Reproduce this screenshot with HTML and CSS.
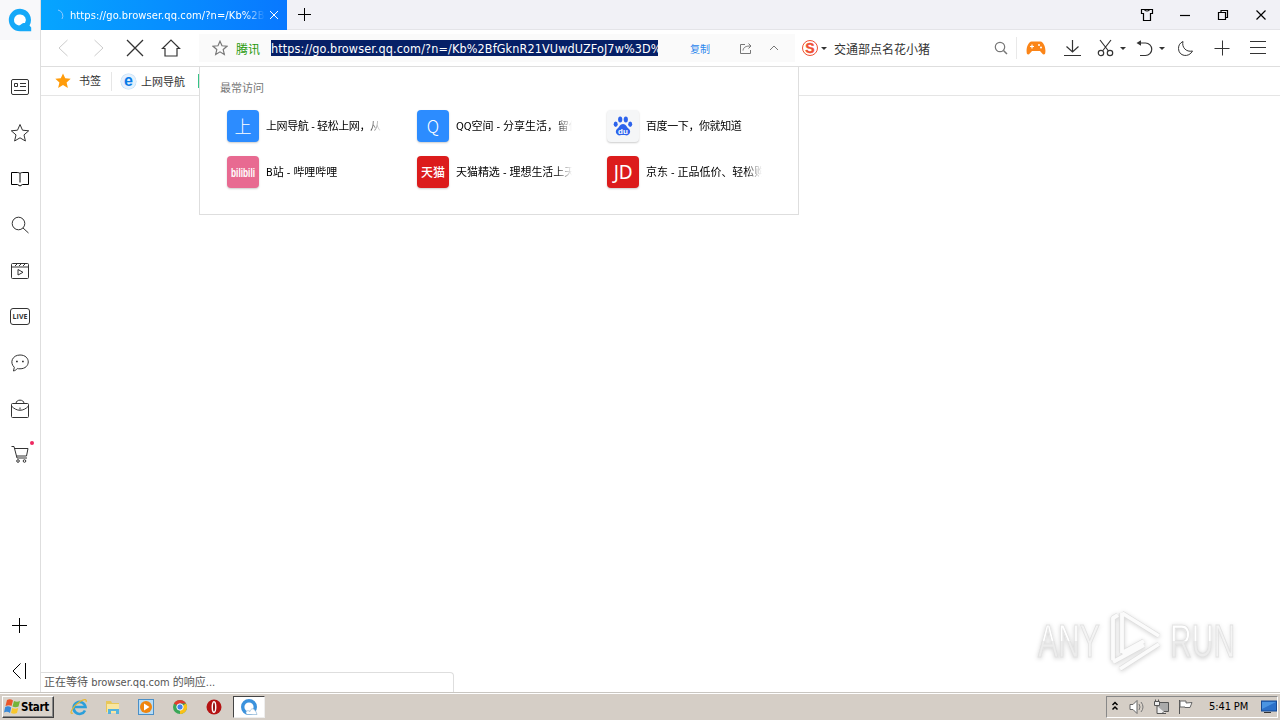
FILE: index.html
```html
<!DOCTYPE html>
<html lang="zh-CN">
<head>
<meta charset="utf-8">
<title>QQ Browser</title>
<link rel="stylesheet" href="styles.css">
</head>
<body>
<div class="window">
  <aside class="sidebar">
    <div class="logo"><svg width="24" height="24" viewBox="0 0 24 24"><path d="M12 .8a11.200 11.200 0 1 0 0 22.400h11.200v-3.600l-1.700-2A11.200 11.200 0 0 0 12 .8z" fill="#15a9f8"/><path d="M12 6.500a5.500 5.500 0 0 0-1 11c2 0 2.500-2.500 4.500-2.500h1.500A5.500 5.500 0 0 0 12 6.500z" fill="#fff"/></svg></div>
    <div class="side-item"><svg width="20" height="18" viewBox="0 0 20 18"><rect x="1.500" y="1.500" width="17" height="15" rx="1.500"/><path d="M4.500 5.500h3v3h-3zM10 5.500h6M10 8.500h6M4 12.500h12"/></svg></div>
    <div class="side-item"><svg width="20" height="20" viewBox="0 0 20 20"><path d="M10 1.500l2.500 5.700 6.200.6-4.700 4.100 1.400 6.100-5.400-3.200L4.600 18 6 11.900 1.300 7.800l6.200-.6z"/></svg></div>
    <div class="side-item dark"><svg width="20" height="16" viewBox="0 0 20 16"><path d="M10 2.500C9 1.500 8 1.500 7 1.500H1.500v12h6L10 15l2.500-1.500h6v-12H13c-1 0-2 0-3 1zv9"/></svg></div>
    <div class="side-item"><svg width="20" height="20" viewBox="0 0 20 20"><circle cx="8.500" cy="8.500" r="6.300"/><path d="M13 13l5.500 5"/></svg></div>
    <div class="side-item"><svg width="20" height="18" viewBox="0 0 20 18"><rect x="1.500" y="1.500" width="17" height="15" rx="1"/><path d="M1.500 5h17M5 4l2-2M9 4l2-2M13 4l2-2M8 7.500v5.500l5-2.700z"/></svg></div>
    <div class="side-item"><span class="live">LIVE</span></div>
    <div class="side-item"><svg width="20" height="20" viewBox="0 0 20 20"><path d="M3.500 18l.8-3.700C-.8 9.500 2.500 2 10 2c11 0 11 13.800 0 13.800-1.200 0-1.800-.1-2.700-.2C6 17 5 17.600 3.500 18z"/><path d="M6 8.500h1.800M12 8.500h1.800" stroke-width="1.600"/></svg></div>
    <div class="side-item"><svg width="20" height="20" viewBox="0 0 20 20"><rect x="1.500" y="4.500" width="17" height="14" rx="1"/><path d="M6 4.500C6 0 14 0 14 4.500M1.500 7c5 5.700 12 5.700 17 0M10 8.500v2"/></svg></div>
    <div class="side-item cart"><svg width="20" height="20" viewBox="0 0 20 20"><path d="M1.500 2.500H4l3 11.500h10M4.500 4.500h13.500l-1.500 7.500H6.500"/><circle cx="8" cy="17" r="1.300"/><circle cx="14.500" cy="17" r="1.300"/></svg><i class="dot"></i></div>
    <div class="side-space"></div>
    <div class="side-item dark add"><svg width="17" height="17" viewBox="0 0 17 17"><path d="M1 8.500h15M8.500 1v15"/></svg></div>
    <div class="side-item dark fold"><svg width="18" height="18" viewBox="0 0 18 18"><path d="M9.500 1.500L2 9l7.500 7.500M14.500 1v16"/></svg></div>
  </aside>
  <main class="browser">
    <header class="tabbar">
      <div class="tab">
        <svg width="8" height="12" viewBox="0 0 8 12"><path d="M1 1a6 6 0 0 1 4 9" stroke="#8dcaff"/></svg>
        <span class="tab-title">https://go.browser.qq.com/?n=/Kb%2B</span>
        <svg class="white" width="10" height="10" viewBox="0 0 10 10"><path d="M1 1l8 8M9 1L1 9"/></svg>
      </div>
      <svg class="newtab" width="15" height="15" viewBox="0 0 15 15"><path d="M7.500 1v13M1 7.500h13"/></svg>
      <div class="controls">
        <svg width="14" height="14" viewBox="0 0 14 14"><path d="M1.500 1.500h3c.3 2 4.700 2 5 0h3v4h-2v7h-7v-7h-2zM4.500 1.500h5"/></svg>
        <svg width="14" height="14" viewBox="0 0 14 14"><path d="M2 7.500h10"/></svg>
        <svg width="14" height="14" viewBox="0 0 14 14"><path d="M2.500 4.500h7v7h-7zM5 4.500v-2h6.500v7h-2"/></svg>
        <svg width="14" height="14" viewBox="0 0 14 14"><path d="M2.500 2.500l9 9M11.500 2.500l-9 9"/></svg>
      </div>
    </header>
    <nav class="toolbar">
      <span class="cell faint"><svg width="12" height="18" viewBox="0 0 12 18"><path d="M10.500 1L2 9l8.500 8"/></svg></span>
      <span class="cell faint"><svg width="12" height="18" viewBox="0 0 12 18"><path d="M1.500 1L10 9l-8.500 8"/></svg></span>
      <span class="cell"><svg width="18" height="18" viewBox="0 0 18 18"><path d="M1 1l16 16M17 1L1 17" stroke-width="1.300"/></svg></span>
      <span class="cell"><svg width="20" height="20" viewBox="0 0 20 20"><path d="M1.500 10.500L10 2l8.500 8.500H16v7.500H4v-7.500z" stroke-width="1.200"/></svg></span>
      <div class="address">
        <svg class="gray" width="16" height="16" viewBox="0 0 20 20"><path d="M10 1.500l2.500 5.700 6.200.6-4.700 4.100 1.400 6.100-5.400-3.200L4.600 18 6 11.900 1.300 7.800l6.200-.6z" stroke-width="1.500"/></svg>
        <span class="owner">腾讯</span>
        <span class="url">https://go.browser.qq.com/?n=/Kb%2BfGknR21VUwdUZFoJ7w%3D%</span>
        <span class="copy">复制</span>
        <svg class="share gray" width="13" height="13" viewBox="0 0 13 13"><path d="M6 2.500H1.500v9h10V8M4 8.500C4.500 5 7 4 11.500 4M9.500 1.500L12 4 9.500 6.500"/></svg>
        <svg class="up gray" width="10" height="6" viewBox="0 0 10 6"><path d="M1 5l4-4 4 4"/></svg>
      </div>
      <div class="search">
        <span class="sogou">S</span><i class="tri"></i>
        <span class="query">交通部点名花小猪</span>
        <svg class="gray" width="14" height="14" viewBox="0 0 14 14"><circle cx="6" cy="6" r="4.700" stroke-width="1.200"/><path d="M9.500 9.500l3.500 3.500" stroke-width="1.500"/></svg>
      </div>
      <span class="cell game"><svg width="20" height="14" viewBox="0 0 20 14"><path d="M1 13C-.5 8 2 1 5.500.5h9C18 1 20.500 8 19 13c-2 1.500-3-1-5-3H6c-2 2-3 4.500-5 3z" fill="#fb8518"/><path d="M6 3.500v4M4 5.500h4" stroke="#fff" stroke-width="1.200"/><circle cx="13" cy="4" r="1" fill="#fff"/><circle cx="15" cy="6.500" r="1" fill="#fff"/></svg></span>
      <span class="cell"><svg width="18" height="18" viewBox="0 0 18 18"><path d="M9.500 1v12M3.500 7.500l6 5.500 6-5.500M1 16.500h17" stroke-width="1.200"/></svg></span>
      <span class="cell combo"><svg width="17" height="18" viewBox="0 0 17 18"><path d="M3 1l8.500 11M14 1L5.500 12" stroke-width="1.200"/><circle cx="4" cy="14" r="2.700" stroke-width="1.200"/><circle cx="13" cy="14" r="2.700" stroke-width="1.200"/></svg><i class="tri"></i></span>
      <span class="cell combo"><svg width="17" height="18" viewBox="0 0 17 18"><path d="M2 4h7.500a6 6 0 0 1 0 12.500H4" stroke-width="1.200"/><path d="M.5 4L5 1.200v5.600z" fill="#333" stroke="none"/></svg><i class="tri"></i></span>
      <span class="cell moon"><svg width="17" height="17" viewBox="0 0 17 17"><path d="M6 1.500C4.500 7 9 12.500 15.500 11 12 18 1.500 16.500 1.500 8.500 1.500 5 3 3 6 1.500z"/></svg></span>
      <span class="cell"><svg width="16" height="16" viewBox="0 0 16 16"><path d="M.5 8.500h15M8.500.5v15"/></svg></span>
      <span class="cell"><svg width="16" height="16" viewBox="0 0 16 16"><path d="M0 1.500h16M0 7.500h16M0 13.500h16" stroke-width="1.200"/></svg></span>
    </nav>
    <div class="bookmarks">
      <svg width="16" height="16" viewBox="0 0 20 20"><path d="M10 .5l2.800 6.200 6.800.6-5.100 4.500 1.600 6.900-6.100-3.600-6.100 3.600 1.600-6.900L.4 7.300l6.800-.6z" fill="#ff9c0b"/></svg>
      <span class="bm-main">书签</span>
      <span class="ebadge">e</span>
      <span class="bm-nav">上网导航</span>
      <i class="green"></i>
    </div>
    <section class="page">
      <div class="suggest">
        <h2>最常访问</h2>
        <div class="sites">
          <div class="site"><span class="tile blue">上</span><span class="name n1">上网导航 - 轻松上网，从</span></div>
          <div class="site"><span class="tile blue">Q</span><span class="name">QQ空间 - 分享生活，留住</span></div>
          <div class="site"><span class="tile baidu"><svg width="20" height="20" viewBox="0 0 20 20"><g fill="#2d63ec"><ellipse cx="7.200" cy="3.500" rx="2.100" ry="3"/><ellipse cx="12.800" cy="3.500" rx="2.100" ry="3"/><ellipse cx="2.700" cy="8.300" rx="2" ry="2.700"/><ellipse cx="17.200" cy="8.300" rx="2" ry="2.700"/><path d="M10 8c3 0 3.500 3 6 5 3 3-.5 7-3 6.300-2-.5-4-.5-6 0C4.500 20 1 16 4 13c2.500-2 3-5 6-5z"/></g><text x="10" y="17.500" text-anchor="middle" class="du">du</text></svg></span><span class="name n1">百度一下，你就知道</span></div>
          <div class="site"><span class="tile pink"><svg width="26" height="18" viewBox="0 0 26 18"><text x="1" y="14" textLength="24" lengthAdjust="spacingAndGlyphs">bilibili</text></svg></span><span class="name">B站 - 哔哩哔哩</span></div>
          <div class="site"><span class="tile red tmall">天猫</span><span class="name">天猫精选 - 理想生活上天</span></div>
          <div class="site"><span class="tile red jd">JD</span><span class="name">京东 - 正品低价、轻松购</span></div>
        </div>
      </div>
      <div class="watermark">
        <span>ANY</span>
        <svg width="58" height="64" viewBox="0 0 58 64"><path d="M16 4v40M16 4l37 23M7 51V9l5-3M16 44l22-12M14 60l39-25M7 53l31-17" fill="none" stroke="#dedede" stroke-width="5" stroke-linejoin="round"/><path d="M16 4v40M16 4l37 23M7 51V9l5-3M16 44l22-12M14 60l39-25M7 53l31-17" fill="none" stroke="#fbfbfb" stroke-width="3.800" stroke-linejoin="round"/></svg>
        <span>RUN</span>
      </div>
      <div class="status">正在等待 browser.qq.com 的响应...</div>
    </section>
  </main>
</div>
<footer class="taskbar">
  <div class="start"><svg width="17" height="17" viewBox="0 0 17 17"><path d="M3 2c2-1 4-1 6 .5L7.500 8C6 7 4 7 1.500 8z" fill="#ea562a"/><path d="M10 3c2 1 4 1 6 0l-1.500 5.500c-2 1-4 1-6 0z" fill="#73b43a"/><path d="M1.200 9c2-1 4-1 6 .5L6 15c-2-1.500-4-1.500-6-.5z" fill="#3a8ad8"/><path d="M8.200 10c2 1 4 1 6 0L13 15c-2 1-4 1-6 0z" fill="#f8c72d"/></svg>Start</div>
  <div class="apps">
    <span><svg width="18" height="18" viewBox="0 0 18 18"><path d="M15 12.500A6 6 0 1 1 15.500 9H5" fill="none" stroke="#2c9fda" stroke-width="2.600"/><path d="M3 15C-2 17 3 8 10 3.500 15 .5 17 1.500 16 4" fill="none" stroke="#e8b72c" stroke-width="1.200"/></svg></span>
    <span><svg width="18" height="18" viewBox="0 0 18 18"><path d="M2 3h5l1 2h7v9H2z" fill="#e8c75a"/><path d="M3 6h12v9H3z" fill="#f9e6a0"/><path d="M4 16v-5h11v5h-3v-3H7v3z" fill="#55b3dd"/></svg></span>
    <span><svg width="18" height="18" viewBox="0 0 18 18"><rect x="1.500" y="1.500" width="15" height="15" fill="#b7dcf5" stroke="#4a8fc7"/><circle cx="9" cy="9" r="6" fill="#ef850e"/><path d="M7 5.500v7l5.500-3.500z" fill="#fff"/></svg></span>
    <span><svg width="16" height="16" viewBox="0 0 16 16"><circle cx="8" cy="8" r="7" fill="#3aa757"/><path d="M8 8L1.900 4.500A7 7 0 0 1 14.100 4.500H8z" fill="#e23b2e"/><path d="M8 8l6.100-3.500A7 7 0 0 1 8 15z" fill="#fbc116"/><circle cx="8" cy="8" r="3.200" fill="#3f83ec" stroke="#fff"/></svg></span>
    <span><svg width="16" height="16" viewBox="0 0 16 16"><circle cx="8" cy="8" r="7.500" fill="#b51313"/><ellipse cx="8" cy="8" rx="1.700" ry="5.300" fill="#8b0808" stroke="#fff" stroke-width="1.500"/></svg></span>
    <span class="active"><svg width="18" height="18" viewBox="0 0 18 18"><circle cx="9" cy="9" r="6.300" fill="none" stroke="#3b92dd" stroke-width="3.400"/><path d="M7 16.500c-3-3 1-5 3-3 1-4 5-4 7 3z" fill="#fff" stroke="#79a8cf" stroke-width=".6"/></svg></span>
  </div>
  <div class="tray">
    <svg class="dark" width="8" height="12" viewBox="0 0 8 12"><path d="M1.500 4L4 1.500 6.500 4M1.500 8.500L4 6l2.500 2.500" stroke-width="1.500"/></svg>
    <svg width="16" height="16" viewBox="0 0 16 16"><path d="M1 5.500h3l4-4v13l-4-4H1z" fill="#fff" stroke="#666"/><path d="M10 5q2 3 0 6M12 3q4 5 0 10" stroke="#777"/></svg>
    <svg width="17" height="16" viewBox="0 0 17 16"><path d="M4.500 3.500h11v9h-11z" fill="#aaa" stroke="#555"/><path d="M1.500 2.500h5v4h-5zM2.500.5v2M5.500.5v2M4 7v7.500h9M10 13v2" fill="#eee" stroke="#555"/></svg>
    <svg width="17" height="16" viewBox="0 0 17 16"><path d="M1.500 1v14" stroke="#555"/><path d="M2 2h6v2l6-.5-2 5H7V8H2z" fill="#fff" stroke="#666"/></svg>
    <time>5:41 PM</time>
    <svg class="desktop" width="16" height="14" viewBox="0 0 16 14"><rect x=".5" y="1" width="15" height="10" fill="#2b70c9" stroke="#174a94"/><path d="M1 2h14L1 9z" fill="#4a94e2"/><path d="M3 12.500h7" stroke="#333"/></svg>
  </div>
</footer>
</body>
</html>
```
FILE: styles.css
```css
* { box-sizing: border-box; }
body {
  margin: 0; width: 1280px; height: 720px; overflow: hidden;
  display: flex; flex-direction: column; background: #fff; color: #333;
  font: 11px "DejaVu Sans Condensed", "Noto Sans CJK SC", sans-serif;
}
svg { display: block; flex: none; fill: none; stroke: #333; stroke-width: 1; }
svg [fill]:not([stroke]) { stroke: none; }
.window { display: flex; height: 692px; }
.dark svg, svg.dark { stroke: #000; }
svg.gray { stroke: #777; }
svg.white { stroke: #fff; }

.sidebar { width: 41px; border-right: 1px solid #dedede; display: flex; flex-direction: column; }
.logo { height: 40px; margin-bottom: 24px; background: #f8f8fa; display: grid; place-items: center; }
.logo svg path { stroke: none; }
.side-item { height: 46px; display: grid; place-items: center; flex: none; }
.live { width: 20px; height: 17px; margin-top: -2px; border: 1px solid #333; border-radius: 3px; font: bold 7px/15px "Open Sans", sans-serif; text-align: center; letter-spacing: .1px; }
.cart { position: relative; }
.cart svg { margin-top: -2px; }
.dot { position: absolute; right: 6px; top: 9px; width: 4px; height: 4px; border-radius: 50%; background: #ee2860; }
.side-space { flex: 1; }
.add { height: 50px; padding-right: 1px; }
.fold { height: 42px; padding-right: 1px; }

.browser { flex: 1; display: flex; flex-direction: column; min-width: 0; }
.tabbar { height: 30px; background: #f1f1f6; display: flex; align-items: center; border-bottom: 1px solid #e4e4e8; }
.tab { width: 246px; height: 30px; margin-bottom: -1px; background: linear-gradient(90deg, #06a5ff, #0878ff); color: #fff; display: flex; align-items: center; padding: 0 8px 0 16px; }
.tab-title { width: 195px; margin: 0 4px 0 5px; white-space: nowrap; font-size: 11px; letter-spacing: .1px; mask-image: linear-gradient(90deg, #000 175px, transparent); }
.newtab { margin-left: 10px; stroke: #000; }
.controls { margin-left: auto; display: flex; gap: 24px; padding-right: 12px; }
.controls svg { stroke: #000; stroke-width: 1.2; }

.toolbar { height: 37px; border-bottom: 1px solid #dedede; display: flex; align-items: center; padding-left: 4px; }
.cell { width: 36px; flex: none; display: flex; align-items: center; justify-content: center; }
.faint svg { stroke: #ccc; }
.address { width: 596px; height: 28px; margin-left: 10px; padding-left: 13px; background: #fafafa; display: flex; align-items: center; white-space: nowrap; flex: none; }
.owner { width: 35px; padding-left: 8px; font-size: 12px; color: #26990a; }
.url { width: 387px; height: 16px; margin-left: 8px; overflow: hidden; background: #062067; color: #fff; font-size: 12.5px; line-height: 17px; letter-spacing: .13px; }
.copy { margin-left: 32px; width: 21px; color: #2c86ed; font-size: 10px; }
.share { margin-left: 28px; }
.up { margin-left: 17px; }
.search { width: 222px; height: 22px; flex: none; display: flex; align-items: center; padding-left: 7px; border-right: 1px solid #e9e9e9; }
.sogou { width: 16px; height: 16px; border: 1.5px solid #ef5033; border-radius: 50%; color: #ef5033; font: 900 14px/14px "Liberation Sans", sans-serif; text-align: center; -webkit-text-stroke: .4px #ef5033; }
.tri { border: 3px solid transparent; border-top-color: #333; border-bottom: 0; margin-left: 3px; }
.query { width: 160px; margin-left: 7px; font-size: 12px; }
.game { width: 37px; }
.combo { width: 39px; justify-content: flex-end; padding-right: 3px; }
.combo svg { margin-right: 3px; }
.moon { width: 39px; margin-left: -2px; margin-right: -1px; }

.bookmarks { height: 29px; border-bottom: 1px solid #e5e5e5; display: flex; align-items: center; padding-left: 14px; }
.bm-main { margin-left: 8px; width: 33px; height: 19px; border-right: 1px solid #e6e6e6; line-height: 20px; white-space: nowrap; }
.ebadge { width: 15px; height: 15px; margin-left: 9px; border-radius: 50%; background: #e5f1fd; box-shadow: 0 0 0 .5px #bcdcf7; color: #087be8; text-align: center; font: bold 16px/13px "Liberation Sans", sans-serif; }
.bm-nav { margin-left: 5px; width: 57px; }
.green { width: 2px; height: 14px; background: #35c486; }

.page { flex: 1; position: relative; }
.suggest { position: absolute; left: 158px; top: -29px; width: 600px; height: 148px; background: #fff; border: 1px solid #dedede; border-top: 0; padding: 13px 0 0 20px; }
.suggest h2 { margin: 0; font-size: 11px; line-height: 17px; font-weight: normal; color: #777; }
.sites { display: grid; grid-template-columns: repeat(3, 190px); grid-auto-rows: 32px; row-gap: 14px; margin: 13px 0 0 7px; }
.site { display: flex; align-items: center; color: #000; }
.tile { width: 32px; height: 32px; border-radius: 4px; display: grid; place-items: center; box-shadow: 0 1px 2px #ccc; color: #fff; font: 300 17px/30px "Noto Sans CJK SC", sans-serif; flex: none; }
.name { width: 116px; margin: -2px 0 0 7px; white-space: nowrap; letter-spacing: -.05px; mask-image: linear-gradient(90deg, #000 100px, transparent); }
.n1 { letter-spacing: -.4px; }
.blue { background: #2c8cff; }
.baidu { background: #f5f6f7; }
.du { fill: #fff; stroke: none; font: bold 8px "Liberation Sans", sans-serif; }
.pink { background: #e86a91; }
.pink text { fill: #fff; stroke: none; font: bold 12px "Liberation Sans", sans-serif; }
.red { background: #dc1c1c; }
.tmall { font: 500 12px/30px "Noto Sans CJK SC", sans-serif; }
.jd { font: 19px/32px "Noto Sans", sans-serif; letter-spacing: -.3px; }
.watermark { position: absolute; left: 997px; top: 513px; display: flex; align-items: center; height: 64px; filter: drop-shadow(0 1px 2px #d4d4d4); }
.watermark span { font: 47px/64px "Liberation Sans", sans-serif; background: linear-gradient(#fff 50%, #ececec 50%); background-clip: text; color: transparent; -webkit-text-stroke: 1.2px #e2e2e2; transform: scaleX(.64); transform-origin: left; width: 68px; }
.watermark svg { margin-right: 6px; }
.status { position: absolute; left: 0; bottom: 0; width: 413px; height: 20px; border: 1px solid #dedede; border-left: 0; border-bottom: 0; border-radius: 0 4px 0 0; background: #fff; padding-left: 3px; color: #555; line-height: 20px; }

.taskbar { height: 28px; background: #d5cec6; border-top: 1px solid #c9c6c1; box-shadow: inset 0 1px #fff; display: flex; align-items: center; padding: 2px; color: #000; }
.start { width: 52px; height: 22px; display: flex; align-items: center; padding-left: 1px; background: #d9d3cb; border: 1px solid; border-color: #fff #404040 #404040 #fff; box-shadow: inset -1px -1px #888; font: bold 11.5px "DejaVu Sans Condensed", sans-serif; letter-spacing: -.3px; }
.start path { stroke: none; }
.apps { display: flex; margin-left: 8px; }
.apps > span { width: 33.8px; height: 22px; display: grid; place-items: center; }
.apps .active { width: 32px; margin-left: 2px; background: #fff; border: 1px solid; border-color: #444 #eee #eee #444; }
.tray { margin-left: auto; width: 172px; height: 22px; display: flex; align-items: center; border: 1px solid; border-color: #888 #fff #fff #888; padding-left: 4px; }
.tray svg { margin-right: 8px; }
.tray svg.dark { margin-right: 10px; }
.tray time { margin-left: 6px; width: 41px; white-space: nowrap; letter-spacing: -.1px; }
.tray .desktop { margin: 0 0 0 11px; }
```
